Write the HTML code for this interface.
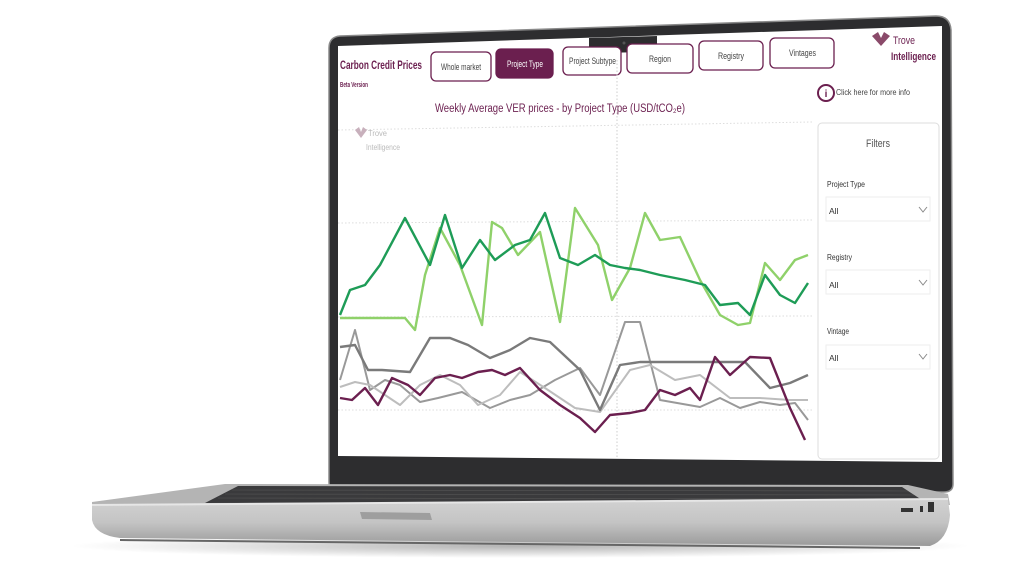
<!DOCTYPE html>
<html><head><meta charset="utf-8"><style>
html,body{margin:0;padding:0;background:#fff;width:1024px;height:584px;overflow:hidden}
svg text{font-family:"Liberation Sans",sans-serif}
</style></head><body>
<svg width="1024" height="584" viewBox="0 0 1024 584" xmlns="http://www.w3.org/2000/svg">
<defs>
<linearGradient id="front" x1="0" y1="0" x2="0" y2="1"><stop offset="0" stop-color="#d2d2d2"/><stop offset="0.5" stop-color="#c4c4c4"/><stop offset="1" stop-color="#9a9a9a"/></linearGradient>
<radialGradient id="sh" cx="0.5" cy="0.5" r="0.5"><stop offset="0" stop-color="#000" stop-opacity="0.3"/><stop offset="1" stop-color="#000" stop-opacity="0"/></radialGradient>
</defs>
<ellipse cx="520" cy="546" rx="450" ry="12" fill="url(#sh)"/>
<!-- lid -->
<path d="M340 36 L936 16 Q950 16 951 30 L953 484 Q953 492 944 492 L336 490 Q329 490 329 482 L329 48 Q329 37 340 36Z" fill="#2d2d2f" stroke="#8a8a8a" stroke-width="1.5"/>
<!-- screen -->
<path d="M338 46 L942 26 L942 462 L338 456 Z" fill="#fff"/>
<!-- notch -->
<path d="M589 38 L657 36 L657 48 Q657 52 652 52 L594 53 Q589 53 589 49Z" fill="#2d2d2f"/>
<circle cx="624" cy="43" r="1.5" fill="#555"/>
<!-- header -->
<text x="340" y="69" font-size="12" font-weight="bold" fill="#6b1f4f" textLength="82" lengthAdjust="spacingAndGlyphs">Carbon Credit Prices</text>
<text x="340" y="87" font-size="7" font-weight="bold" fill="#6b1f4f" textLength="28" lengthAdjust="spacingAndGlyphs">Beta Version</text>
<g font-size="9" fill="#444" stroke-width="1.3">
<rect x="431" y="52" width="60" height="29" rx="5" fill="#fff" stroke="#6b1f4f"/><text x="441" y="70" textLength="40" lengthAdjust="spacingAndGlyphs">Whole market</text>
<rect x="496" y="49" width="57" height="29" rx="5" fill="#6b1f4f" stroke="#6b1f4f"/><text x="507" y="67" fill="#fff" textLength="36" lengthAdjust="spacingAndGlyphs">Project Type</text>
<rect x="563" y="47" width="58" height="28" rx="5" fill="#fff" stroke="#6b1f4f"/><text x="569" y="64" textLength="47" lengthAdjust="spacingAndGlyphs">Project Subtype</text>
<rect x="627" y="44" width="66" height="29" rx="5" fill="#fff" stroke="#6b1f4f"/><text x="649" y="62" textLength="22" lengthAdjust="spacingAndGlyphs">Region</text>
<rect x="699" y="41" width="64" height="29" rx="5" fill="#fff" stroke="#6b1f4f"/><text x="718" y="59" textLength="26" lengthAdjust="spacingAndGlyphs">Registry</text>
<rect x="770" y="38" width="64" height="30" rx="5" fill="#fff" stroke="#6b1f4f"/><text x="789" y="56" textLength="27" lengthAdjust="spacingAndGlyphs">Vintages</text>
</g>
<path d="M872 36 L878 32 L881 38 L884 32 L890 36 L881 46Z" fill="#8a4a6a"/>
<text x="893" y="44" font-size="11" fill="#6b1f4f" textLength="22" lengthAdjust="spacingAndGlyphs">Trove</text>
<text x="891" y="60" font-size="11" font-weight="bold" fill="#6b1f4f" textLength="45" lengthAdjust="spacingAndGlyphs">Intelligence</text>
<circle cx="826" cy="93" r="8" fill="#fff" stroke="#6b1f4f" stroke-width="2"/>
<text x="826" y="97" font-size="10" font-weight="bold" fill="#6b1f4f" text-anchor="middle">i</text>
<text x="836" y="95" font-size="8.5" fill="#444" textLength="74" lengthAdjust="spacingAndGlyphs">Click here for more info</text>
<text x="435" y="112" font-size="11.5" fill="#6b1f4f" textLength="250" lengthAdjust="spacingAndGlyphs">Weekly Average VER prices - by Project Type (USD/tCO₂e)</text>
<!-- grid -->
<g stroke="#ddd" stroke-dasharray="1.5 2" stroke-width="1">
<line x1="338" y1="130" x2="812" y2="122"/><line x1="338" y1="223" x2="812" y2="220"/><line x1="338" y1="317" x2="812" y2="316"/><line x1="338" y1="410" x2="812" y2="410"/>
<line x1="617" y1="60" x2="617" y2="458" stroke="#ccc"/>
</g>
<path d="M355 130 L359 127 L361 132 L363 127 L367 130 L361 138Z" fill="#c8b0bc"/>
<text x="368" y="136" font-size="8" fill="#bbb" textLength="19" lengthAdjust="spacingAndGlyphs">Trove</text>
<text x="366" y="150" font-size="8" fill="#bbb" textLength="34" lengthAdjust="spacingAndGlyphs">Intelligence</text>
<!-- lines -->
<g fill="none" stroke-linejoin="round" stroke-width="2.4">
<polyline stroke="#999" stroke-width="2" points="340,380 355,330 370,390 385,380 400,385 420,402 438,398 462,392 490,408 510,400 530,395 555,380 580,368 600,395 625,322 640,322 660,400 700,407 720,398 740,408 760,402 780,405 795,403 808,420"/>
<polyline stroke="#bdbdbd" stroke-width="2" points="340,387 355,382 370,385 385,395 400,405 420,385 440,375 460,385 478,405 500,395 520,372 545,388 575,408 600,412 630,370 650,365 675,380 700,375 730,398 760,398 790,400 808,400"/>
<polyline stroke="#7a7a7a" points="340,347 355,345 368,370 382,370 410,372 430,338 450,338 468,345 490,358 510,350 530,338 550,342 580,370 600,410 620,365 640,362 700,362 745,362 770,388 790,383 808,375"/>
<polyline stroke="#6b1f4f" points="340,398 352,400 365,388 378,405 392,378 408,385 420,395 435,378 450,375 462,378 478,372 492,370 505,375 520,368 540,390 560,405 580,418 595,432 610,415 630,413 645,410 660,390 675,395 690,388 700,400 715,357 730,375 750,357 770,358 790,408 805,440"/>
<polyline stroke="#8fd16a" points="340,318 360,318 385,318 405,318 415,330 425,275 440,228 460,265 482,325 492,222 502,228 518,255 540,232 560,322 575,208 598,245 612,300 630,268 645,213 660,240 680,237 700,280 720,315 738,325 750,323 765,263 780,280 795,260 808,255"/>
<polyline stroke="#1e9c57" points="340,315 350,290 365,285 380,265 405,218 430,265 445,215 462,268 480,240 495,260 515,245 530,240 545,213 560,258 578,265 595,255 610,265 625,268 640,270 660,275 685,280 705,285 720,305 738,303 750,315 765,275 780,295 795,303 808,283"/>
</g>
<!-- filters -->
<rect x="818" y="123" width="121" height="336" rx="4" fill="#fff" stroke="#ddd"/>
<text x="878" y="147" font-size="11" fill="#555" text-anchor="middle" textLength="24" lengthAdjust="spacingAndGlyphs">Filters</text>
<g font-size="8.5" fill="#333">
<text x="827" y="187" textLength="38" lengthAdjust="spacingAndGlyphs">Project Type</text>
<rect x="826" y="197" width="104" height="24" fill="#fff" stroke="#eee"/><text x="829" y="214">All</text>
<text x="827" y="260" textLength="25" lengthAdjust="spacingAndGlyphs">Registry</text>
<rect x="826" y="270" width="104" height="24" fill="#fff" stroke="#eee"/><text x="829" y="288">All</text>
<text x="827" y="334" textLength="22" lengthAdjust="spacingAndGlyphs">Vintage</text>
<rect x="826" y="345" width="104" height="24" fill="#fff" stroke="#eee"/><text x="829" y="361">All</text>
</g>
<g fill="none" stroke="#888" stroke-width="1"><polyline points="919,207 923,212 927,207"/><polyline points="919,280 923,285 927,280"/><polyline points="919,354 923,359 927,354"/></g>
<!-- base -->
<path d="M92 502 L225 484 L908 485 L948 494 L950 505 L92 507Z" fill="#b4b4b4"/>
<path d="M238 486 L902 487 L925 502 L205 503Z" fill="#3a3a3c"/>
<g stroke="#555" stroke-width="0.6"><line x1="232" y1="490" x2="908" y2="491"/><line x1="225" y1="494" x2="914" y2="495"/><line x1="218" y1="498" x2="920" y2="499"/></g>
<path d="M92 505 L948 499 L950 515 Q948 540 930 546 L120 538 Q95 535 92 520Z" fill="url(#front)"/>
<path d="M92 505 L948 499" stroke="#e6e6e6" stroke-width="2"/>
<path d="M360 512 L430 513 L432 520 L362 519Z" fill="#9e9e9e"/>
<rect x="901" y="508" width="12" height="4" fill="#333"/><rect x="920" y="506" width="3" height="6" fill="#333"/><rect x="928" y="502" width="6" height="10" fill="#333"/>
<path d="M120 540 L920 548" stroke="#666" stroke-width="2"/>
</svg>
</body></html>
